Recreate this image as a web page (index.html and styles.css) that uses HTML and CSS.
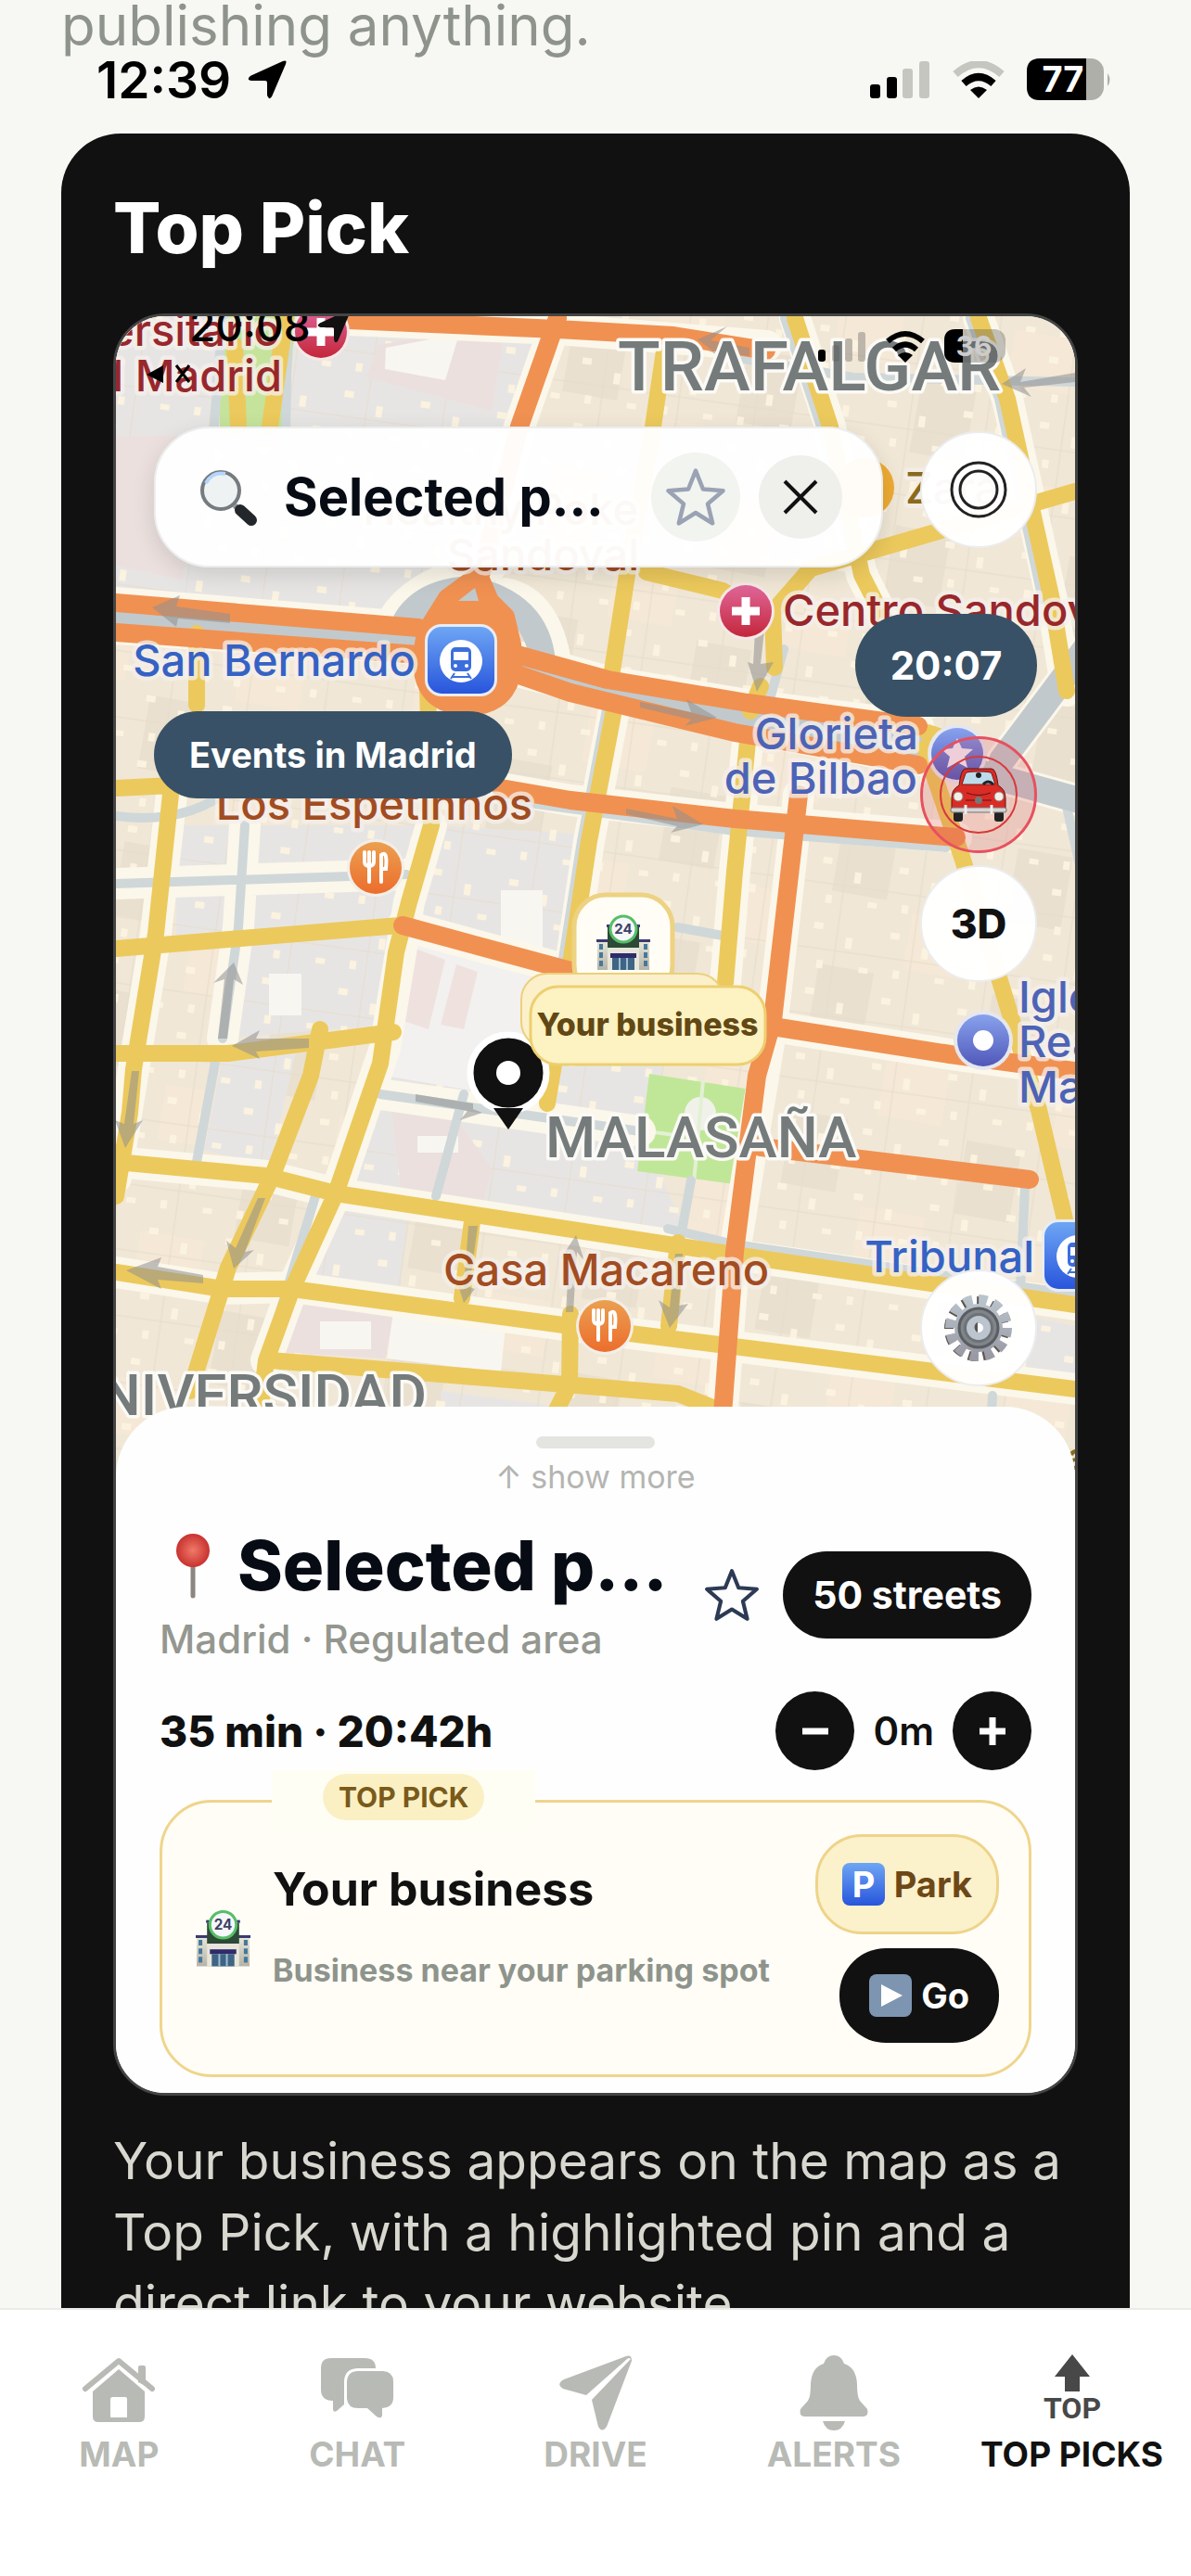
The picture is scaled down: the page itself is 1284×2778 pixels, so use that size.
FILE: index.html
```
<!DOCTYPE html>
<html lang="en">
<head>
  <meta charset="UTF-8" />
  <meta name="viewport" content="width=device-width, initial-scale=1" />
  <title>Top Picks</title>
  <link rel="stylesheet" href="styles.css">
</head>
<body>
  <!-- shared icons -->
  <svg class="sprite" aria-hidden="true">
    <defs>
      <linearGradient id="wall" x1="0" y1="0" x2="0" y2="1">
        <stop offset="0" stop-color="#e9e6d6"/><stop offset="1" stop-color="#b5b3a8"/>
      </linearGradient>
      <symbol id="shop" viewBox="0 0 58 62">
        <rect x="1" y="29" width="56" height="31" fill="url(#wall)"/>
        <rect x="0" y="27" width="58" height="3" fill="#3b3a72"/>
        <rect x="11" y="11" width="36" height="3" fill="#3b3a72"/>
        <rect x="12" y="14" width="34" height="22" fill="#2c4a35"/>
        <rect x="12" y="36" width="34" height="24" fill="#e8e6da"/>
        <rect x="15" y="42" width="28" height="5" fill="#2f2b6b"/>
        <rect x="17" y="47" width="24" height="13" fill="#3f6484"/>
        <path d="M25 47v13M33 47v13" stroke="#9dc0d6" stroke-width="2"/>
        <path d="M5 32v6M5 41v6M5 50v6M53 32v6M53 41v6M53 50v6" stroke="#44799c" stroke-width="4"/>
        <circle cx="29" cy="16" r="14" fill="#f6f7fa" stroke="#57bd68" stroke-width="3"/>
        <text x="29" y="21" class="shop-text">24</text>
      </symbol>
      <symbol id="star" viewBox="0 0 60 60">
        <path d="M30 5L37 22.500L56 24L41.500 36.500L46 55L30 45L14 55L18.500 36.500L4 24L23 22.500Z" fill="none" stroke="currentColor" stroke-width="4" stroke-linejoin="round"/>
      </symbol>
      <symbol id="locate" viewBox="0 0 40 40">
        <path d="M36 1Q41 -1 39 4L25 37Q22 42 20 36V23Q20 21 18 21H4Q-2 20 3 16Z" fill="currentColor"/>
      </symbol>
      <symbol id="food" viewBox="0 0 64 64">
        <circle cx="32" cy="32" r="31" fill="#f3eee8"/>
        <circle cx="32" cy="32" r="28" fill="url(#orange)"/>
        <path d="M20 15v10q0 5 5 5t5-5V15M25 15v32M38 47V18q7-6 5 15h-4" fill="none" stroke="#fff" stroke-width="4" stroke-linecap="round"/>
      </symbol>
      <symbol id="train" viewBox="0 0 80 80">
        <rect x="1" y="1" width="78" height="78" rx="18" fill="#e9ecf2"/>
        <rect x="4" y="4" width="72" height="72" rx="15" fill="url(#blue)"/>
        <circle cx="40" cy="41" r="23" fill="#fff"/>
        <rect x="29" y="26" width="22" height="26" rx="5" fill="#3c6fdd"/>
        <rect x="32" y="31" width="16" height="9" fill="#fff"/>
        <circle cx="34" cy="46" r="2" fill="#fff"/><circle cx="46" cy="46" r="2" fill="#fff"/>
        <path d="M33 54l-4 6M47 54l4 6M31 58h18" stroke="#3c6fdd" stroke-width="2"/>
      </symbol>
      <symbol id="cross" viewBox="0 0 64 64">
        <circle cx="32" cy="32" r="31" fill="#f5e8e8"/>
        <circle cx="32" cy="32" r="28" fill="url(#pink)"/>
        <path d="M32 17v30M17 32h30" stroke="#fff" stroke-width="9"/>
      </symbol>
      <linearGradient id="orange" x1="0" y1="0" x2="0" y2="1"><stop offset="0" stop-color="#eba050"/><stop offset="1" stop-color="#ec6d2c"/></linearGradient>
      <linearGradient id="blue" x1="0" y1="0" x2="0" y2="1"><stop offset="0" stop-color="#6ea6f4"/><stop offset="1" stop-color="#2855dc"/></linearGradient>
      <linearGradient id="pink" x1="0" y1="0" x2="0" y2="1"><stop offset="0" stop-color="#e0679a"/><stop offset="1" stop-color="#c4263a"/></linearGradient>
      <linearGradient id="violet" x1="0" y1="0" x2="0" y2="1"><stop offset="0" stop-color="#88a2ee"/><stop offset="1" stop-color="#5058b8"/></linearGradient>
      <linearGradient id="steel" x1="0" y1="0" x2="0" y2="1"><stop offset="0" stop-color="#b9c3cc"/><stop offset="1" stop-color="#9a9aa5"/></linearGradient>
      <radialGradient id="pinhead"><stop offset="0" stop-color="#f07a68"/><stop offset="1" stop-color="#c83230"/></radialGradient>
    </defs>
  </svg>

  <div class="app">
    <div class="status">
      <span class="status-time">12:39
        <svg class="status-arrow" aria-hidden="true"><use href="#locate"/></svg>
      </span>
      <span class="status-icons">
        <svg width="65" height="40" viewBox="0 0 65 40" aria-hidden="true">
          <rect x="0" y="25" width="11" height="15" rx="3"/><rect x="18" y="17" width="11" height="23" rx="3"/>
          <rect x="35" y="8" width="11" height="32" rx="3" fill="#c5c6c0"/><rect x="53" y="0" width="11" height="40" rx="3" fill="#c5c6c0"/>
        </svg>
        <svg width="56" height="40" viewBox="0 0 56 40" aria-hidden="true">
          <path d="M3 14Q28 -8 53 14" fill="none" stroke="#c5c6c0" stroke-width="8"/>
          <path d="M12 24Q28 10 44 24" fill="none" stroke="#000" stroke-width="8"/>
          <path d="M19 31Q28 24 37 31L28 40Z"/>
        </svg>
        <svg width="92" height="46" viewBox="0 0 92 46" aria-label="Battery 77%">
          <rect width="83" height="45" rx="14" fill="#aeafa9"/>
          <path d="M14 0H64V45H14Q0 45 0 31V14Q0 0 14 0Z"/>
          <path d="M87 16Q92 23 87 30Z" fill="#aeafa9"/>
          <text x="39" y="36" class="battery-text">77</text>
        </svg>
      </span>
    </div>

    <main class="content">
      <p class="intro">publishing anything.</p>

      <section class="card">
        <h2>Top Pick</h2>

        <div class="phone">
          <!-- street map of Malasaña -->
          <svg class="map" viewBox="125 341 1034 1320" preserveAspectRatio="xMidYMin slice" aria-hidden="true">
            <defs>
              <pattern id="yards" width="83" height="71" patternUnits="userSpaceOnUse" patternTransform="rotate(8)">
                <path d="M12 10h10v7h-10zM48 22h7v12h-7zM66 52h10v6h-10zM20 50h7v9h-7z" fill="#fbf3df"/>
                <path d="M0 38h83M38 0v71" stroke="#e5dccb" stroke-width="1"/>
              </pattern>
              <pattern id="lots" width="190" height="160" patternUnits="userSpaceOnUse" patternTransform="rotate(10)">
                <path d="M0 0h70v60h-70z" fill="#f5e8d6"/><path d="M100 70h60v80h-60z" fill="#e9e0d0"/>
              </pattern>
            </defs>
            <rect x="125" y="341" width="1034" height="1320" fill="#f0e7d6"/>
            <rect x="125" y="341" width="1034" height="1320" fill="url(#lots)"/>

            <g fill="#e7e5e4">
              <path d="M125 341H590L530 640L480 690L125 640Z"/>
              <path d="M462 890L640 900L600 1050L445 990Z"/>
              <path d="M190 890H460L430 1000L190 1010Z"/>
              <path d="M245 1015L425 1000L420 1105L240 1120Z"/>
              <path d="M430 1010L600 1060L720 1110L700 1240L740 1330L370 1280L415 1130Z"/>
              <path d="M365 1300L440 1315L430 1400L320 1380Z"/>
              <path d="M475 1500L590 1515V1560H480Z"/>
              <path d="M1110 1420L1159 1430V1490L1090 1475Z"/>
              <path d="M240 1140L320 1130L290 1260L220 1240Z"/>
            </g>
            <rect x="125" y="341" width="1034" height="1320" fill="url(#yards)"/>
            <g fill="#ebe0de">
              <path d="M408 372L545 348L530 443L395 407Z"/>
              <path d="M125 470H205L212 560L195 625L125 610Z"/>
              <path d="M320 1400L424 1418L415 1465L300 1458Z"/>
              <path d="M420 1180L480 1190L530 1260L520 1300L432 1280Z"/>
            </g>
            <g fill="#f8f6f0">
              <path d="M416 375L495 360L480 410L415 398Z"/>
              <path d="M424 1415L545 1430L540 1480L417 1465Z"/>
              <path d="M345 1425H400V1455H345Z"/>
              <path d="M290 1050h35v45h-35zM540 960h45v70h-45zM450 1225h44v18h-44z"/>
            </g>
            <path d="M430 1010L600 1062L590 1190L415 1160Z" fill="#f2f1f0"/>
            <path d="M440 1020L480 1035L462 1110L432 1100ZM492 1040L515 1048L500 1110L475 1105Z" fill="#efe2de"/>
            <path d="M235 341H318L310 460H237Z" fill="#c5e39b"/>
            <path d="M700 1158L810 1175L799 1278L687 1263Z" fill="#c0e798"/>
            <ellipse cx="755" cy="1201" rx="17" ry="18" fill="#f0f2ea"/>
            <path d="M758 1165L748 1275M690 1219L735 1225" stroke="#e3f0d4" stroke-width="4" fill="none"/>

            <!-- light casing under the streets -->
            <g class="road casing">
              <path d="M125 650L451 677M125 678L451 700M554 707L655 735L806 760L990 783M554 723L792 783L990 820"/>
              <path d="M376 345L601 355L826 373M601 343L560 460L519 617"/>
              <path d="M540 850L615 863L792 883L1031 903M434 998L615 1047L833 1107L1024 1137L1159 1155M861 857L833 1100L792 1350L779 1520"/>
              <path d="M663 760L635 907L615 1040M806 800L792 940L782 1060M185 857L168 1007L144 1153L125 1270M465 890L441 973L415 1130L362 1287L315 1390L287 1467"/>
              <path d="M125 1253L287 1268L362 1287L792 1353L1159 1407M125 1372L240 1390L315 1388L615 1430L1159 1498"/>
              <path d="M530 610Q430 630 415 690M545 640Q590 650 600 720"/>
              <path d="M857 343L895 460L929 620L956 673M1055 343L1086 430L1134 647L1150 745"/>
              <path d="M1080 820L1170 700M1010 820L1170 865M125 953L438 943M264 890L257 1000L240 1120M410 1180L690 1220"/>
            </g>

            <g class="road minor">
              <path d="M125 953L438 943M264 890L257 1000L240 1120M233 1140L212 1253M410 1180L690 1220M745 1273L734 1333M730 1000L785 1010M125 880Q200 890 250 850M240 341L230 470M310 341L308 470M340 1290L285 1470M1105 1280L1100 1390M1070 1505L1068 1540"/>
              <path d="M655 760L627 907L606 1040M720 1325L792 1342L1159 1396M540 862L792 896L1020 914M1150 870L1170 960"/>
              <path d="M845 700L820 790M470 1290L500 1180M790 385L920 407L1159 412M846 343L885 460L918 600M1046 343L1077 430L1124 647"/>
            </g>
            <g class="road major">
              <path d="M1080 820L1170 700M1010 820L1170 865M125 666L460 692M554 715L800 774L990 802"/>
              <path d="M430 690Q440 640 505 635Q580 650 585 715"/>
            </g>

            <g class="road yellow">
              <path d="M717 372L704 460L676 620L659 730M857 343L895 460L929 620L956 673M1055 343L1086 430L1134 647L1150 745M1159 530L929 597L874 613L833 660L835 720M697 617L779 637L800 650"/>
              <path d="M212 683V760M253 373L257 460M308 341L291 460M820 740L809 767"/>
              <path d="M125 850L185 847L168 1007L144 1153L140 1200L125 1290M461 740L465 890L441 973L427 1027L410 1147L362 1287L315 1390L287 1467L278 1540"/>
              <path d="M663 760L635 907L615 1040L590 1190M806 800L792 940L782 1060M125 1023L431 998M125 1136H246L424 1113M345 1110L335 1160L294 1267L246 1367L205 1500"/>
              <path d="M125 1253L287 1268L362 1287L792 1353L1159 1407M125 1372L240 1390H315L615 1430L1159 1498M291 1467L451 1480L731 1503L786 1525M615 1417L614 1493L595 1530M731 1340L721 1430M510 1310L498 1400"/>
              <path d="M997 807L1038 927L1093 1107L1120 1197L1161 1370M1000 790L1030 800"/>
            </g>
            <g class="road orange">
              <path d="M376 345L601 355L726 362L826 378M601 343L560 460L519 617"/>
              <path d="M125 650L451 677M125 682L451 706M554 705L655 733L806 758L990 783M554 726L615 747L792 790L990 825"/>
              <path class="ring" d="M516 620L482 645L460 680Q440 760 505 762Q560 760 552 695L545 665L528 648Z"/>
              <path d="M540 850L615 863L792 883L1031 903M434 998L615 1047L833 1107L1024 1137L1159 1155M820 1237L1110 1272"/>
              <path d="M861 857L833 1100L816 1160L792 1350L779 1525"/>
            </g>
            <path d="M512 634L494 648H516Z" fill="#c2c9cc"/>

            <!-- one-way arrows -->
            <g fill="#8f8f8f" fill-opacity=".55">
              <path id="oneway" d="M690 757L745 768L740 754L773 774L738 783L745 776L690 763Z"/>
              <use href="#oneway" x="-15" y="115"/>
              <path d="M248 662L190 654L194 642L164 655L190 676L192 667L248 672Z"/>
              <path d="M808 375L766 367L784 352L752 366L776 384L764 378L808 384Z"/>
              <path d="M1159 402L1100 412L1106 397L1080 414L1112 428L1104 418L1159 412Z"/>
              <path d="M814 680H824L820 716L834 714L816 746L806 714L812 716Z"/>
              <path d="M252 1038L262 1062L252 1056L245 1120H235L242 1056L230 1060Z"/>
              <path d="M333 1120L276 1120L280 1111L250 1128L280 1142L276 1134L333 1130Z"/>
              <path d="M448 1180L510 1190V1196L520 1200L496 1208L504 1198L448 1188Z"/>
              <path d="M142 1155H150L144 1212L154 1208L135 1238L124 1208L134 1212Z"/>
              <path d="M278 1292H286L264 1350L274 1348L252 1368L244 1338L254 1346Z"/>
              <path d="M219 1375V1384L170 1380L174 1390L136 1370L174 1356L170 1366Z"/>
              <path d="M505 1322H515L506 1388L512 1390L500 1405L494 1386L500 1390Z"/>
              <path d="M621 1332L630 1360L622 1350L618 1415H610L614 1350L604 1358Z"/>
              <path d="M728 1352H736L732 1408L742 1406L722 1432L710 1402L722 1410Z"/>
            </g>

            <use href="#cross" x="314" y="326" width="64" height="64"/>
            <use href="#cross" x="772" y="627" width="64" height="64"/>
            <use href="#train" x="457" y="672" width="80" height="80"/>
            <use href="#train" x="1122" y="1314" width="80" height="80"/>
            <use href="#food" x="373" y="904" width="64" height="64"/>
            <use href="#food" x="620" y="1398" width="64" height="64"/>
            <circle cx="932" cy="526" r="32" fill="#edab33"/>
            <circle cx="1032" cy="813" r="32" fill="#e6e6ee"/><circle cx="1032" cy="813" r="28" fill="url(#violet)"/>
            <path d="M1032 796l5 11 12 1-9 8 3 12-11-6-11 6 3-12-9-8 12-1z" fill="#f3f0f8"/>
            <circle cx="1060" cy="1122" r="32" fill="#e6e6ee"/><circle cx="1060" cy="1122" r="28" fill="url(#violet)"/><circle cx="1060" cy="1122" r="11" fill="#fff"/>

            <g class="place">
              <text x="302" y="373" class="red end">ersitario</text>
              <text x="304" y="422" class="red end">l Madrid</text>
              <text x="688" y="566" class="brown end">Healthy Poke</text>
              <text x="689" y="615" class="brown end">Sandoval</text>
              <text x="844" y="675" class="red">Centro Sandoval</text>
              <text x="976" y="543" class="olive">Zara</text>
              <text x="448" y="729" class="blue end">San Bernardo</text>
              <text x="990" y="808" class="indigo end">Glorieta</text>
              <text x="989" y="856" class="indigo end">de Bilbao</text>
              <text x="574" y="884" class="brown end">Los Espetinhos</text>
              <text x="1098" y="1092" class="indigo">Iglesia</text>
              <text x="1098" y="1140" class="indigo">Real</text>
              <text x="1098" y="1189" class="indigo">Maravillas</text>
              <text x="478" y="1386" class="brown">Casa Macareno</text>
              <text x="1115" y="1372" class="blue end">Tribunal</text>
            </g>
            <g class="district">
              <text x="666" y="421" class="wide">TRAFALGAR</text>
              <text x="588" y="1248">MALASAÑA</text>
              <text x="460" y="1526" class="end">UNIVERSIDAD</text>
            </g>
            <text x="1150" y="1585" class="spill">a</text>

            <!-- recorded status bar -->
            <text x="204" y="368" class="map-clock">20:08</text>
            <use href="#locate" x="342" y="334" width="36" height="36"/>
            <path d="M158 404L176 394V413Z"/><path d="M190 394l14 18M204 394l-14 18" stroke="#000" stroke-width="3"/>
            <rect x="882" y="377" width="8" height="13" rx="3"/>
            <g fill="#555" fill-opacity=".35"><rect x="897" y="372" width="8" height="18" rx="3"/><rect x="911" y="365" width="8" height="25" rx="3"/><rect x="925" y="358" width="8" height="32" rx="3"/><rect x="1018" y="355" width="66" height="36" rx="12"/></g>
            <path d="M957 368Q976 352 995 368M964 377Q976 366 988 377" fill="none" stroke="#000" stroke-width="6"/><path d="M968 383Q976 377 984 383L976 391Z"/>
            <path d="M1038 355V391H1030Q1018 391 1018 380V367Q1018 355 1030 355Z"/>
            <text x="1050" y="384" class="map-battery">36</text>

            <!-- parked car and business pin -->
            <circle cx="548" cy="1157" r="41" fill="#111" stroke="#fff" stroke-width="7"/>
            <path d="M532 1195H564L548 1218Z" fill="#111"/>
            <circle cx="548" cy="1157" r="13" fill="#fff"/>
            <rect x="619" y="965" width="106" height="110" rx="34" fill="#fffdf5" stroke="#edd282" stroke-width="5"/>
            <use href="#shop" x="643" y="986" width="58" height="62"/>
            <rect x="562" y="1050" width="218" height="80" rx="28" fill="#fbf0c9" stroke="#ecd07c" stroke-width="2"/>
            <rect x="572" y="1064" width="253" height="84" rx="30" fill="#fcf2c2" stroke="#edcf70" stroke-width="3"/>
            <text x="698" y="1117" class="marker-text">Your business</text>
          </svg>

          <div class="controls">
            <div class="controls-row controls-top">
              <div class="search">
                <svg width="64" height="64" viewBox="0 0 64 64" aria-hidden="true">
                  <path d="M39 41L45 47" stroke="#8b9096" stroke-width="6"/>
                  <path d="M45 46L57 57" stroke="#23262b" stroke-width="12" stroke-linecap="round"/>
                  <circle cx="24" cy="25" r="20" fill="#eff2f3" stroke="#767b80" stroke-width="4"/>
                  <path d="M8 17Q15 4 29 7" fill="none" stroke="#b5d6fa" stroke-width="4"/>
                </svg>
                <input type="text" value="Selected p..." aria-label="Search place">
                <button class="round grey-star" aria-label="Save"><svg width="68" height="68"><use href="#star"/></svg></button>
                <button class="round round-small" aria-label="Clear"><svg width="38" height="38" viewBox="0 0 38 38"><path d="M2 2L36 36M36 2L2 36" stroke="#111" stroke-width="4"/></svg></button>
              </div>
              <button class="fab" aria-label="Locate me">
                <svg width="62" height="62" viewBox="0 0 62 62" fill="none" stroke="#222" stroke-width="3"><circle cx="31" cy="31" r="29"/><circle cx="31" cy="31" r="20"/></svg>
              </button>
            </div>
            <div class="controls-row controls-main">
              <button class="pill events">Events in Madrid</button>
              <div class="stack">
                <button class="pill clock">20:07</button>
                <button class="fab fab-car" aria-label="My car">
                  <svg width="120" height="120" viewBox="2 2 120 120">
                    <circle cx="62" cy="62" r="41" fill="none" stroke="#d8393c" stroke-width="2"/>
                    <rect x="35" y="80" width="10" height="11" rx="3" fill="#222"/><rect x="79" y="80" width="10" height="11" rx="3" fill="#222"/>
                    <path d="M41 52Q43 34 48 34H76Q81 34 83 52Q91 56 91 66V80H33V66Q33 56 41 52Z" fill="#db2b25" stroke="#5b1714" stroke-width="1"/>
                    <path d="M44 51L48 39Q49 37 62 37T76 39L80 51Z" fill="#bcdcec" stroke="#7d1b17" stroke-width="1"/>
                    <circle cx="62" cy="41" r="3" fill="#222"/><path d="M67 51q5-6 11 0" fill="none" stroke="#222" stroke-width="3"/>
                    <circle cx="40" cy="64" r="5" fill="#f5efe8" stroke="#888"/><circle cx="84" cy="64" r="5" fill="#f5efe8" stroke="#888"/>
                    <path d="M49 60Q62 65 75 60M48 68H76" stroke="#5b1714" stroke-width="1" fill="none"/>
                    <circle cx="62" cy="68" r="4" fill="#777"/>
                    <rect x="32" y="76" width="60" height="5" rx="2" fill="#d8d4d4" stroke="#777" stroke-width="1"/>
                    <path d="M48 73v10M76 73v10" stroke="#eee" stroke-width="3"/>
                  </svg>
                </button>
                <button class="fab">3D</button>
                <button class="fab fab-gear" aria-label="Settings">
                  <svg width="74" height="74" viewBox="0 0 74 74">
                    <circle cx="35" cy="38" r="30" fill="none" stroke="#5d5750" stroke-width="10" stroke-dasharray="9 6.700"/>
                    <circle cx="37" cy="37" r="30" fill="none" stroke="url(#steel)" stroke-width="12" stroke-dasharray="9 6.700"/>
                    <circle cx="37" cy="37" r="26" fill="url(#steel)"/>
                    <circle cx="37" cy="37" r="21" fill="#7f858a" stroke="#5a5d61" stroke-width="3"/>
                    <circle cx="37" cy="37" r="16" fill="#6d7277"/>
                    <circle cx="37" cy="37" r="9" fill="#fff" stroke="#bcc4ce" stroke-width="8"/>
                    <path d="M36 31a6 6 0 0 0 0 11z" fill="#555"/>
                  </svg>
                </button>
              </div>
            </div>
          </div>

          <div class="sheet">
            <div class="handle"></div>
            <button class="more">↑ show more</button>

            <div class="place-row">
              <div class="place-info">
                <h3>
                  <svg width="74" height="72" viewBox="0 0 74 72" aria-hidden="true">
                    <path d="M36 36V69" stroke="#8c8580" stroke-width="5" stroke-linecap="round"/>
                    <circle cx="36" cy="20" r="18" fill="url(#pinhead)"/>
                  </svg>
                  <span>Selected p...</span>
                </h3>
                <p>Madrid · Regulated area</p>
              </div>
              <button class="navy-star" aria-label="Favourite"><svg width="62" height="62"><use href="#star"/></svg></button>
              <button class="dark streets">50 streets</button>
            </div>

            <div class="time-row">
              <strong>35 min · 20:42h</strong>
              <div class="stepper">
                <button class="dark step" aria-label="Less"><svg width="32" height="32" viewBox="0 0 32 32"><path d="M2 16H30" stroke="#fff" stroke-width="7"/></svg></button>
                <span>0m</span>
                <button class="dark step" aria-label="More"><svg width="32" height="32" viewBox="0 0 32 32"><path d="M2 16H30M16 1V31" stroke="#fff" stroke-width="7"/></svg></button>
              </div>
            </div>

            <article class="pick">
              <span class="badge"><span>TOP PICK</span></span>
              <svg class="pick-icon" width="59" height="66" aria-hidden="true"><use href="#shop"/></svg>
              <div class="pick-info">
                <h4>Your business</h4>
                <p>Business near your parking spot</p>
              </div>
              <div class="pick-actions">
                <button class="park">
                  <svg width="46" height="46" viewBox="0 0 46 46" aria-hidden="true"><rect width="46" height="46" rx="8" fill="url(#blue)"/><text x="23" y="37" class="p-text">P</text></svg>
                  Park
                </button>
                <button class="dark go">
                  <svg width="46" height="46" viewBox="0 0 46 46" aria-hidden="true"><rect width="46" height="46" rx="8" fill="#7d95b0"/><path d="M13 11L36 23L13 35Z" fill="#fff"/></svg>
                  Go
                </button>
              </div>
            </article>
          </div>
        </div>

        <p class="description">Your business appears on the map as a Top Pick, with a highlighted pin and a direct link to your website.</p>
      </section>
    </main>

    <nav class="tabs">
      <a href="#map">
        <svg width="84" height="84" viewBox="0 0 84 84" aria-hidden="true">
          <path d="M6 37L42 7L78 37" fill="none" stroke="currentColor" stroke-width="6" stroke-linecap="round" stroke-linejoin="round"/>
          <path d="M63 30V14Q63 12 65 12H69Q71 12 71 14V34Z" fill="currentColor"/>
          <path fill-rule="evenodd" d="M42 16L70 40V67Q70 73 64 73H20Q14 73 14 67V40ZM36 46Q33 46 33 48V68H51V48Q51 46 49 46Z" fill="currentColor"/>
        </svg>
        MAP
      </a>
      <a href="#chat">
        <svg width="84" height="84" viewBox="0 0 84 84" aria-hidden="true">
          <path d="M14 4H50Q62 4 62 15H42Q28 16 28 30V54L20 61Q16 63 16 59V50Q3 50 3 38V15Q3 4 14 4Z" fill="currentColor"/>
          <path d="M43 18H70Q81 19 81 29V47Q81 57 69 58V66Q68 70 63 67L53 58H43Q32 58 31 48V29Q32 18 43 18Z" fill="currentColor"/>
        </svg>
        CHAT
      </a>
      <a href="#drive">
        <svg width="84" height="84" viewBox="0 0 84 84" aria-hidden="true">
          <path d="M75 2L8 27Q-1 32 7 37L32 44L76 5Q78 3 80 5L38 49L45 78Q49 85 54 78L81 7Q81 0 75 2Z" fill="currentColor"/>
        </svg>
        DRIVE
      </a>
      <a href="#alerts">
        <svg width="84" height="84" viewBox="0 0 84 84" aria-hidden="true">
          <path d="M42 1Q50 1 53 10Q66 14 67 32Q67 46 70 50L78 59Q80 66 74 67H10Q4 66 6 59L14 50Q17 46 17 32Q18 14 31 10Q34 1 42 1ZM30 72H54Q51 82 42 82T30 72Z" fill="currentColor"/>
        </svg>
        ALERTS
      </a>
      <a href="#top-picks" class="active">
        <svg width="84" height="84" viewBox="0 0 84 84" aria-hidden="true">
          <path d="M42 0L61 24H50V40H34V24H23Z" fill="#484848"/>
          <text x="42" y="69" class="top-text">TOP</text>
        </svg>
        TOP PICKS
      </a>
    </nav>
  </div>
</body>
</html>
```
FILE: styles.css
```
* {
  box-sizing: border-box;
}

body {
  margin: 0;
  background: #f7f8f3;
  color: #111;
  font-family: Inter, "Liberation Sans", sans-serif;
}

button {
  border: none;
  padding: 0;
  font: inherit;
  color: inherit;
  background: none;
  cursor: pointer;
  flex-shrink: 0;
}

h2, h3, h4, p {
  margin: 0;
}

svg {
  display: block;
  flex-shrink: 0;
}

.sprite {
  position: absolute;
  width: 0;
  height: 0;
}

.app {
  position: relative;
  height: 100vh;
  display: flex;
  flex-direction: column;
}

.content {
  flex: 1;
  min-height: 0;
  overflow: hidden;
  padding: 0 66px;
}

/* status bar floats over the scrolled page */
.status {
  position: absolute;
  top: 56px;
  left: 0;
  right: 0;
  display: flex;
  justify-content: space-between;
  align-items: center;
  height: 60px;
  padding: 0 85px 0 104px;
  color: #000;
}

.status-time,
.status-icons {
  display: flex;
  align-items: center;
}

.status-time {
  gap: 18px;
  font-size: 55px;
  font-weight: 600;
}

.status-arrow {
  width: 42px;
  height: 42px;
}

.status-icons {
  gap: 24px;
}

.battery-text {
  font-size: 38px;
  font-weight: 700;
  text-anchor: middle;
  fill: #fff;
}

.intro {
  font-size: 60px;
  line-height: 54px;
  color: #8e948c;
}

.card {
  margin-top: 90px;
  padding: 56px;
  border-radius: 64px;
  background: #111;
}

.card h2 {
  margin-bottom: 48px;
  color: #fff;
  font-size: 76px;
  line-height: 90px;
  font-weight: 800;
}

.description {
  margin-top: 32px;
  font-size: 55px;
  line-height: 77px;
  color: #d8d8d0;
}

/* phone preview */
.phone {
  position: relative;
  overflow: hidden;
  border: 3px solid #444;
  border-radius: 56px;
  background: #fff;
}

.map {
  position: absolute;
  top: 0;
  left: 0;
  width: 100%;
  height: 1320px;
}

.road path {
  fill: none;
  stroke-linecap: round;
  stroke-linejoin: round;
}

.casing path { stroke: #fbf7ea; stroke-width: 34; }
.minor path { stroke: #cfd7d9; stroke-width: 10; }
.major path { stroke: #c2c9cc; stroke-width: 28; }
.yellow path { stroke: #ecc95c; stroke-width: 18; }
.orange path { stroke: #f09152; stroke-width: 20; }
.orange .ring { fill: #f09152; }

.place text,
.district text {
  paint-order: stroke;
  stroke-linejoin: round;
}

.place text {
  font-size: 47px;
  font-weight: 500;
  stroke: rgba(245, 240, 236, .75);
  stroke-width: 9;
}

.place .red { fill: #98272c; }
.place .brown { fill: #a24c22; }
.place .blue { fill: #3562c4; }
.place .indigo { fill: #4d63b6; }
.place .olive { fill: #8a6a1c; }

.end {
  text-anchor: end;
}

.district text {
  font-family: Roboto, sans-serif;
  font-size: 62px;
  font-weight: 500;
  fill: #757b7b;
  stroke: #fbfaf6;
  stroke-width: 7;
}

.district .wide {
  font-size: 75px;
}

.spill {
  font-size: 40px;
  font-weight: 600;
  fill: #8a6a1c;
}

.map-clock {
  font-size: 46px;
  font-weight: 500;
}

.map-battery {
  font-size: 30px;
  font-weight: 700;
  text-anchor: middle;
  fill: #ccc;
}

.marker-text {
  font-size: 34px;
  font-weight: 800;
  text-anchor: middle;
  fill: #624814;
}

.shop-text {
  font-size: 15px;
  font-weight: 700;
  text-anchor: middle;
  fill: #3d4166;
}

.controls {
  position: relative;
  display: flex;
  flex-direction: column;
  min-height: 1176px;
  padding: 119px 41px 22px;
}

.controls-row {
  display: flex;
  align-items: stretch;
  justify-content: space-between;
  gap: 40px;
}

.controls-top {
  align-items: flex-start;
}

.controls-top .fab {
  margin-top: 5px;
}

.controls-main {
  flex: 1;
  margin-top: 50px;
}

.search {
  flex: 1;
  min-width: 0;
  display: flex;
  align-items: center;
  gap: 20px;
  height: 152px;
  padding: 0 42px 0 46px;
  border: 2px solid #eceded;
  border-radius: 60px;
  background: rgba(255, 255, 255, .96);
  box-shadow: 0 8px 24px rgba(0, 0, 0, .12);
}

.search input {
  flex: 1;
  min-width: 0;
  padding: 0 0 0 8px;
  border: none;
  outline: none;
  background: none;
  color: #070b14;
  font-family: inherit;
  font-size: 56px;
  font-weight: 700;
}

.round {
  display: grid;
  place-items: center;
  width: 96px;
  height: 96px;
  border-radius: 50%;
  background: #f2f4f0;
}

.round-small {
  width: 90px;
  height: 90px;
  background: #eff0ec;
}

.grey-star { color: #9aa2b4; }
.navy-star { color: #2c3a54; }

.fab {
  display: grid;
  place-items: center;
  width: 126px;
  height: 126px;
  border: 2px solid #ececee;
  border-radius: 50%;
  background: rgba(255, 255, 255, .97);
  font-size: 44px;
  font-weight: 800;
}

.fab-car {
  border: 3px solid #e8505f;
  background: rgba(215, 60, 80, .18);
}

.fab-gear {
  margin-top: auto;
}

.stack {
  display: flex;
  flex-direction: column;
  align-items: flex-end;
  gap: 13px;
}

.pill {
  border-radius: 56px;
  background: #385166;
  color: #fff;
  font-weight: 700;
}

.clock {
  width: 196px;
  height: 111px;
  margin-bottom: 8px;
  font-size: 42px;
}

.events {
  align-self: flex-start;
  height: 94px;
  margin-top: 105px;
  padding: 0 38px;
  font-size: 38px;
}

/* bottom sheet */
.sheet {
  position: relative;
  padding: 32px 47px 17px;
  border-radius: 76px 76px 0 0;
  background: #fefefe;
}

.handle {
  width: 128px;
  height: 13px;
  margin: 0 auto;
  border-radius: 7px;
  background: #e4e5e1;
}

.more {
  display: block;
  margin: 10px auto 0;
  font-size: 34px;
  line-height: 42px;
  color: #b4b5b1;
}

.place-row {
  display: flex;
  align-items: center;
  gap: 24px;
  margin-top: 34px;
}

.place-info {
  flex: 1;
  min-width: 0;
}

.place-info h3 {
  display: flex;
  align-items: center;
  gap: 10px;
  color: #070b14;
  font-size: 74px;
  line-height: 80px;
  font-weight: 800;
  white-space: nowrap;
}

.place-info p {
  margin-top: 16px;
  color: #94978f;
  font-size: 42px;
  line-height: 48px;
  font-weight: 500;
}

.dark {
  background: #111;
  color: #fff;
}

.streets {
  height: 94px;
  padding: 0 32px;
  border-radius: 47px;
  font-size: 41px;
  font-weight: 700;
}

.time-row {
  display: flex;
  align-items: center;
  justify-content: space-between;
  margin-top: 32px;
  font-size: 46px;
}

.time-row strong {
  font-weight: 800;
}

.stepper {
  display: flex;
  align-items: center;
  gap: 20px;
  font-size: 42px;
  font-weight: 600;
}

.step {
  display: grid;
  place-items: center;
  width: 85px;
  height: 85px;
  border-radius: 50%;
}

.pick {
  position: relative;
  display: flex;
  align-items: center;
  gap: 24px;
  margin-top: 32px;
  padding: 34px 32px 34px 36px;
  border: 3px solid #efd58c;
  border-radius: 56px;
  background: #fffdf6;
}

/* label sits on the card border */
.badge {
  position: absolute;
  top: -36px;
  left: 118px;
  padding: 5px 55px 13px;
  background: #fffef5;
}

.badge span {
  display: block;
  padding: 0 17px;
  border-radius: 25px;
  background: #fbf0c4;
  color: #7a5a1a;
  font-size: 30px;
  line-height: 50px;
  font-weight: 700;
}

.pick-info {
  flex: 1;
  min-width: 0;
  white-space: nowrap;
}

.pick-info h4 {
  font-size: 50px;
  line-height: 60px;
  font-weight: 700;
}

.pick-info p {
  margin-top: 36px;
  margin-bottom: 28px;
  color: #8e948c;
  font-size: 34px;
  line-height: 44px;
  font-weight: 700;
}

.pick-actions {
  display: flex;
  flex-direction: column;
  align-items: flex-end;
  gap: 15px;
}

.park,
.go {
  display: flex;
  align-items: center;
  gap: 10px;
  height: 102px;
  padding: 0 32px;
  border-radius: 50px;
  font-size: 38px;
  font-weight: 700;
}

.park {
  height: 108px;
  padding: 0 26px;
  border: 3px solid #eed48a;
  background: #fbf1cb;
  color: #6d4817;
}

.p-text {
  font-size: 38px;
  font-weight: 700;
  text-anchor: middle;
  fill: #fff;
}

/* bottom navigation */
.tabs {
  position: relative;
  display: grid;
  grid-template-columns: repeat(5, 1fr);
  align-items: start;
  height: 289px;
  padding-top: 48px;
  border-top: 2px solid #ebece8;
  background: #fff;
}

.tabs a {
  display: flex;
  flex-direction: column;
  align-items: center;
  color: #b8bab5;
  font-size: 37px;
  line-height: 48px;
  font-weight: 700;
  text-decoration: none;
  white-space: nowrap;
}

.tabs .active {
  color: #111;
}

.top-text {
  font-family: Roboto, sans-serif;
  font-size: 32px;
  font-weight: 700;
  text-anchor: middle;
  fill: #484848;
}
```
